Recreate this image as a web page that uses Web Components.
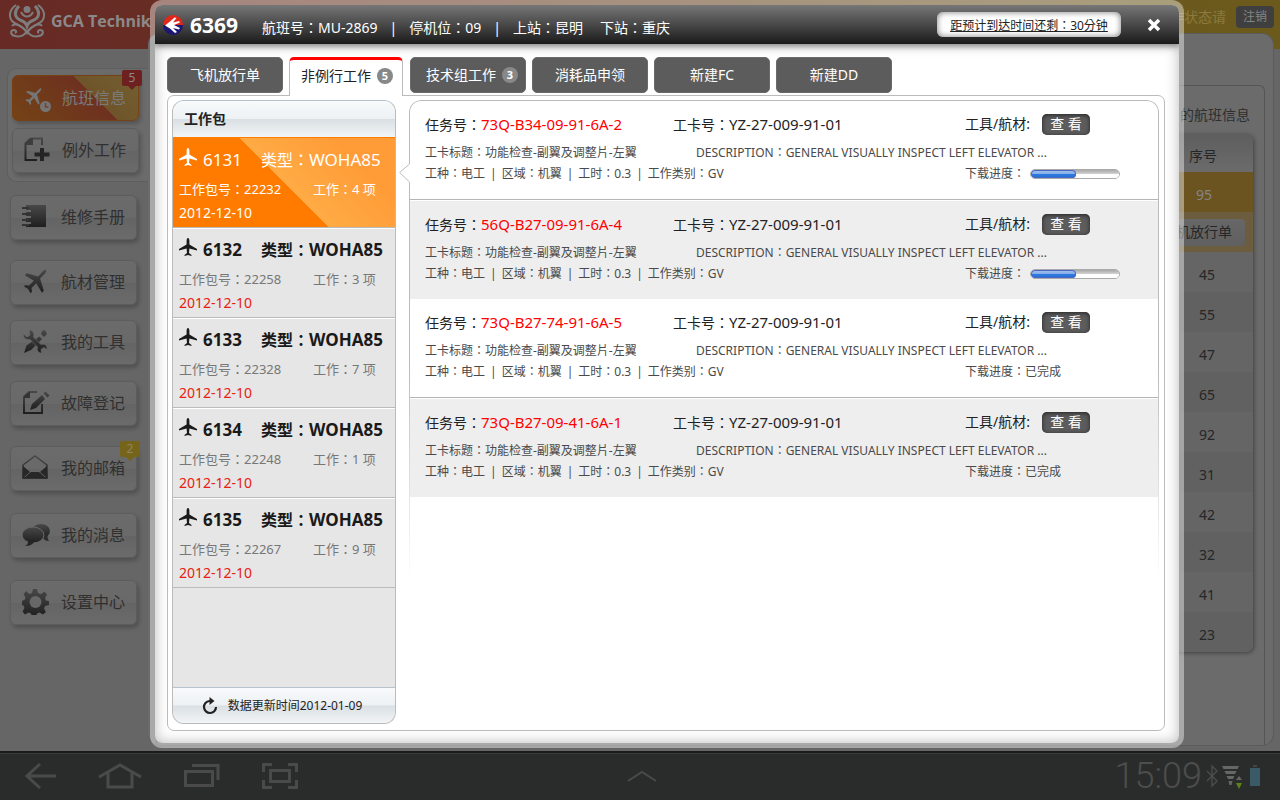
<!DOCTYPE html>
<html lang="zh-TW">
<head>
<meta charset="utf-8">
<title>GCA Technik</title>
<style>
html,body{margin:0;height:100%}
body{font:14px/20px "Noto Sans","Noto Sans CJK TC","Noto Sans CJK SC",sans-serif;color:#222;background:#666}
</style>
</head>
<body>
<app-shell></app-shell>
<script>
const define=(name,html,ready)=>{
  const t=document.createElement('template');
  t.innerHTML='<style>*{box-sizing:border-box}button,a{font:inherit;color:inherit;text-decoration:none}button{border:0;padding:0;background:none;cursor:pointer}svg{display:block}</style>'+html;
  customElements.define(name,class extends HTMLElement{
    constructor(){super();this.attachShadow({mode:'open'}).append(t.content.cloneNode(true));}
    connectedCallback(){if(ready)ready(this,this.shadowRoot);}
  });
};

const PLANE='M25 2c1 1 0 3-1.500 4.500L19 11l4 13-2 2-6-10-5 5 .5 4L9 26.500 6.500 22 2 19.500 3.500 18l4 .5 5-5L3 7.500 5 5.500l12 3.500 4.500-5C23 2.500 24.500 1.500 25 2z';
const ICONS={
  flight:`<path transform="scale(.68)" fill="#757575" d="${PLANE}"/><circle cx="21.500" cy="19.500" r="5.500" fill="#757575"/><path d="M21.500 16v4h3" stroke="#7c4226" stroke-width="1.500" fill="none"/>`,
  extra:'<path d="M6.500 1.500H18V8M6.500 1.500L1.500 6.500V23H13" stroke="url(#g)" stroke-width="2" fill="none"/><path d="M1 8V6l6-5h2v7z" fill="#3d3d3d"/><path d="M16 11h4v4.500h5.500v4H20V24h-4v-4.500h-5.500v-4H16z" fill="#242424"/>',
  manual:'<path fill="url(#g)" d="M4 1h20v22H4v-3h5v-2H4v-4h5v-2H4V8h5V6H4z"/><path d="M0 4h7M0 10h7M0 16h7M0 21h7" stroke="#333" stroke-width="2"/>',
  plane:`<path fill="url(#g)" transform="translate(0 -1) scale(.95)" d="${PLANE}"/>`,
  tools:'<path d="M20 2l3-1 2 4-3 3-3-3zM17.500 7.500l2.500 2.500L9 21l-7 3 2.500-7.500z" fill="url(#g)"/><path d="M1.500 5l3.500 3 3-2-1-5c3 0 5 2 5 5l-.5 2 7.500 7.500 2-.5c3 0 4.500 3 4 5.500l-3-2-3 2 .500 3.500c-3 0-5-2.500-4-6L8 10.500C4 11 1 9 1.500 5z" fill="url(#g)" stroke="#686868" stroke-width=".7"/>',
  report:'<path d="M15 2H7L2 7v16h18v-9" stroke="url(#g)" stroke-width="2" fill="none"/><path d="M2 8V6l5-4h1v6z" fill="#333"/><path d="M20 5l3 4L14 18l-6 2 2-6zM21.500 3.500l2-2 4 4-2 2z" fill="url(#g)"/>',
  mail:'<path d="M1 10L13 1l12 9v13H1z" fill="none" stroke="url(#g)" stroke-width="1.500"/><path d="M1 11l7 6-7 6zM25 11l-7 6 7 6zM2 23l7-6h8l7 6z" fill="#272727"/>',
  chat:'<ellipse cx="19" cy="9" rx="9" ry="7" fill="url(#g)"/><path d="M26 12c-1 4 0 5 1 7-4 0-5-2-7-4z" fill="#2c2c2c"/><ellipse cx="11" cy="13" rx="11" ry="8" fill="url(#g)" stroke="#686868"/><path d="M6 19c0 3-1 4-3 5 4 0 7-1 9-4z" fill="#252525"/>',
  gear:'<path fill="url(#g)" d="M11 0h4l1 4 3 1 3.500-2.500 2.500 3-2 3.500 1 2.500 3 .5v4l-4 1-1 2.500 2 3.500-3 2.500-3.500-2-2.500 1-1 3h-4l-1-3-2.500-1-3.500 2-2.500-3 2-3.500-1-2.500-3-1v-3.500l4-1 1-2.500-2-3.500 3-3L7 5l3-1z"/><circle cx="13.500" cy="13" r="6" fill="#676767"/>'
};

/* Sidebar entry: icon, slotted label and an optional count flag */
define('side-item',`<style>
:host{display:block;position:relative;width:127px}
a{display:flex;align-items:center;gap:var(--label-gap,11px);height:45px;padding:0 0 1px 11px;border:1px solid #5d5d5d;border-radius:6px;font-size:16px;line-height:24px;color:#303030;background:linear-gradient(#6b6b6b,#696969 50%,#646464 51%,#6b6b6b);box-shadow:2px 3px 4px rgba(0,0,0,.22);white-space:nowrap}
svg{width:28px;height:26px;flex:none}
:host([active]) a{color:#7a7a7a;border-color:#784015;height:46px;background:linear-gradient(45deg,#754216 0,#703b1a 30%,#6f3020 62%,transparent 62%),linear-gradient(225deg,#726030,#6b3f21)}
:host([active]) svg{margin-top:4px}
.flag{position:absolute;right:-3px;top:-5px;width:20px;height:16px;border-radius:2px;text-align:center;font-size:12px;line-height:16px;color:#8b8b8b;background:#6d201f}
.flag::after{content:"";position:absolute;left:6px;top:16px;border:4px solid transparent;border-bottom:0;border-top-color:#6d201f}
:host([gold]) .flag{background:#75641a;color:#8d8560}:host([gold]) .flag::after{border-top-color:#75641a}
</style><a href="#"><svg viewBox="0 0 28 26" aria-hidden="true"><defs><linearGradient id="g" x2="0" y2="1"><stop stop-color="#484848"/><stop offset="1" stop-color="#1f1f1f"/></linearGradient></defs><g></g></svg><slot></slot></a>`,(el,r)=>{
  r.querySelector('svg>g').innerHTML=ICONS[el.getAttribute('icon')];
  if(el.hasAttribute('count')&&!r.querySelector('.flag')){const b=document.createElement('span');b.className='flag';b.textContent=el.getAttribute('count');r.append(b);}
});

define('side-nav',`<style>
:host{display:flex;flex-direction:column;padding:0 0 0 9px}
.brand{display:flex;align-items:center;gap:5px;height:49px;padding-bottom:8px;color:#8a8a8a;font:700 16px/24px "Open Sans",sans-serif;white-space:nowrap;margin-left:-1px}
.brand svg{flex:none}
.open{display:flex;flex-direction:column;gap:7px;margin:19px 0 0 -2px;padding:6px 0 8px 4px;border:1px solid #5e5e5e;border-right:0;border-radius:9px 0 0 9px;background:#6b6b6b;--label-gap:10px}
.two,.mid,.low{display:flex;flex-direction:column;padding-left:1px}
.two{margin-top:13px;gap:20px}.mid{margin-top:15px;gap:16px}.low{margin-top:20px;gap:22px}
</style>
<div class="brand"><svg width="38" height="34" viewBox="0 0 38 34" fill="none" stroke="#7d7d7d" aria-hidden="true"><circle cx="19" cy="5.500" r="3.500" fill="#7d7d7d" stroke="none"/><path d="M8 1C2 5 0 12 4 17c4 4 11 4 15 12 4-8 11-8 15-12 4-5 2-12-4-16" stroke-width="2"/><path d="M11 2c-5 5-5 11 1 14 3 1 6 3 7 6 1-3 4-5 7-6 6-3 6-9 1-14" stroke-width="3"/><path d="M13 8c3 6 9 6 12 0" stroke-width="2"/><path d="M19 27c-3 5-8 6-12 5-5-1-5-6-1-6 2 0 3 2 1 3M19 27c3 5 8 6 12 5 5-1 5-6 1-6-2 0-3 2-1 3M4 22c3-4 10 0 15 6 5-6 12-10 15-6" stroke-width="2"/></svg><span>GCA Technik</span></div>
<div class="open"><side-item icon="flight" count="5" active>航班信息</side-item><side-item icon="extra">例外工作</side-item></div>
<div class="two"><side-item icon="manual">维修手册</side-item><side-item icon="plane">航材管理</side-item></div>
<div class="mid"><side-item icon="tools">我的工具</side-item><side-item icon="report">故障登记</side-item></div>
<div class="low"><side-item icon="mail" count="2" gold>我的邮箱</side-item><side-item icon="chat">我的消息</side-item><side-item icon="gear">设置中心</side-item></div>`);

/* Flight list behind the dialog */
define('flight-board',`<style>
:host{display:grid;grid-template-rows:33px 1fr;padding-right:6px;min-width:0}
header{display:flex;justify-content:flex-end;align-items:center;gap:10px;color:#8a7a40}
header button{width:38px;height:22px;border-radius:4px;background:#3f3f3f;color:#858585;font-size:12px;line-height:20px}
main{display:flex;flex-direction:column;margin-bottom:5px;padding:51px 8px 0;border:1px solid #5c5c5c;border-left:0;border-radius:12px;background:#6b6b6b}
section{display:flex;flex-direction:column;flex:1;padding:19px 11px 0;border:1px solid #555;border-bottom:0;border-radius:6px 6px 0 0;align-items:flex-end}
h2{margin:0 3px 9px 0;font-size:14px;line-height:20px;font-weight:400;color:#2e2e2e}
table{width:100%;border-collapse:collapse;border-radius:7px;overflow:hidden;box-shadow:1px 1px 4px rgba(0,0,0,.4);color:#262626;text-align:center;background:#656565}
th{height:38px;padding:6px 8px 0 0;font-weight:400;background:linear-gradient(#5e5e5e,#6b6b6b)}
td{height:40px;padding:6px 0 0}
th:last-child,td:last-child{width:92px}
tr:nth-child(even) td{background:#616161}
tbody tr:nth-child(1) td{background:#6c5420;color:#858585;padding-right:6px}
tbody tr:nth-child(2) td{background:#6c5d3e;padding:0 8px 0 0;text-align:right}
td button{height:27px;width:96px;border-radius:4px;background:linear-gradient(#676767,#606060);color:#262626}
</style>
<header><span>作状态请</span><button type="button">注销</button></header>
<main><section><h2>的航班信息</h2><table><thead><tr><th></th><th>序号</th></tr></thead><tbody></tbody></table></section></main>`,(el,r)=>{
  r.querySelector('tbody').innerHTML='<tr><td></td><td>95</td></tr><tr><td colspan="2"><button type="button">飞机放行单</button></td></tr>'+[45,55,47,65,92,31,42,32,41,23].map(n=>`<tr><td></td><td>${n}</td></tr>`).join('');
});

define('tab-button',`<style>
:host{display:block;width:116px}
button{display:flex;width:100%;height:36px;align-items:center;justify-content:center;gap:6px;border-radius:5px;color:#fff;background:#5c5c5c;border:1px solid #6a6a6a;white-space:nowrap}
i{font:700 11px/16px "Open Sans",sans-serif;width:16px;height:16px;border-radius:50%;background:#888;color:#fff}
:host([count]) button{padding-left:8px}
:host([active]){width:115px}
:host([active]) button{height:39px;position:relative;width:114px;color:#222;background:#fff;border:1px solid #bbb;border-top:3px solid #f00;border-bottom:0;border-radius:5px 5px 0 0;padding:0 0 4px 2px}
</style><button type="button" role="tab"><slot></slot></button>`,(el,r)=>{
  const b=r.querySelector('button');b.setAttribute('aria-selected',el.hasAttribute('active'));
  if(el.hasAttribute('count')&&!b.querySelector('i')){const i=document.createElement('i');i.textContent=el.getAttribute('count');b.append(i);}
});

/* One work package in the left list */
define('pack-item',`<style>
:host{display:block}
button{display:grid;width:100%;height:90px;text-align:left;grid-template:32px 26px 22px/134px 1fr;align-content:start;align-items:center;padding:5px 0 0 6px;font-size:13px;line-height:20px;color:#777;border-bottom:1px solid #bbb;border-top:1px solid #fff;white-space:nowrap}
strong{grid-column:1/-1;display:flex;align-items:center;font-size:16px;line-height:24px;color:#1a1a1a}
strong svg{margin:-6px 6px 0 0}strong span+span{margin-left:19px}
strong slot{font-size:17px}
time{font-size:14px;color:#e8200f}
:host([active]) button{height:91px;color:#fff;border-top-color:#ff7e00;padding-top:6px;background:linear-gradient(45deg,#ff7b00 50%,transparent 50%),linear-gradient(45deg,#ffab45 50%,#ff9c38 80%)}
:host([active]) strong{color:#fff;font-weight:400}:host([active]) time{color:#fff}
</style><button type="button"><strong><svg width="18" height="18" viewBox="0 0 18 18" fill="currentColor" aria-hidden="true"><path d="M9 0c1 0 1.400 1.500 1.400 3v3.500L18 11v1.500l-7.600-2-.4 4.500 2.500 2v1L9 17l-3.500 1v-1L8 15l-.4-4.500-7.600 2V11l7.600-4.500V3C7.600 1.500 8 0 9 0z"/></svg><span><slot name="no"></slot></span><span>类型：<slot name="type"></slot></span></strong><span>工作包号：<slot name="pack"></slot></span><span>工作：<slot name="jobs"></slot> 项</span><time><slot name="date"></slot></time></button>`);

define('pack-list',`<style>
:host{display:flex;flex-direction:column;width:224px;flex:none;border:1px solid #bbb;border-top-color:#b6c3cd;border-radius:12px;overflow:hidden;background:#e6e6e6}
h2,footer{margin:0;background:linear-gradient(#f8fafb,#edf1f4 49%,#d9dfe3 51%,#f2f5f7)}
h2{height:36px;padding-left:11px;font-size:14px;line-height:36px}
.rows{flex:1}
footer{display:flex;align-items:center;justify-content:center;gap:10px;height:36px;border-top:1px solid #b6c3cd;padding-right:4px;font-size:12px;line-height:20px;color:#222}
</style><h2>工作包</h2><div class="rows"></div><footer><svg width="16" height="18" viewBox="0 0 16 18" aria-hidden="true"><path d="M9 4H7.500A6 6 0 1 0 14 10" fill="none" stroke="#222" stroke-width="2.200"/><path d="M7.500 0l5 4-5 4z" fill="#222"/></svg><span>数据更新时间2012-01-09</span></footer>`,(el,r)=>{
  r.querySelector('.rows').innerHTML=[[6131,22232,4],[6132,22258,3],[6133,22328,7],[6134,22248,1],[6135,22267,9]].map(([n,p,j],i)=>`<pack-item${i?'':' active'}><span slot="no">${n}</span><span slot="type">WOHA85</span><span slot="pack">${p}</span><span slot="jobs">${j}</span><span slot="date">2012-12-10</span></pack-item>`).join('');
});

define('task-row',`<style>
:host{display:block;height:99px;padding:10px 0 0 15px;border-bottom:1px solid transparent;font-size:12px;line-height:20px;color:#4a4a4a;white-space:nowrap}
:host(:nth-child(odd)){border-bottom-color:#b5b5b5}
:host(:nth-child(even)){background:#eee;border-top:1px solid #fff}
.line{display:grid;align-items:center;grid-template-columns:248fr 292fr 193fr}
.line>*{min-width:0}
.top{height:26px;font-size:14px;color:#222;margin-bottom:5px}
.desc{grid-template-columns:271fr 462fr;height:21px}.meta{grid-template-columns:540fr 193fr;height:21px}
b{font-weight:400;color:#f00}
.num{font-size:15px}
.act,.load{display:flex;align-items:center}.act{gap:12px}
.act button{width:48px;height:21px;border-radius:5px;color:#fff;line-height:20px;background:#5c5c5c;box-shadow:inset 0 1px 4px #222}
.cats{display:flex;gap:5px}
progress{appearance:none;width:90px;height:10px;margin-left:5px;border:1px solid #aaa;border-radius:5px;overflow:hidden;background:#fff}
progress::-webkit-progress-bar{background:linear-gradient(#a8a8a8,#cfcfcf 45%,#fff 55%)}
progress::-webkit-progress-value{border-radius:4px;background:linear-gradient(#a9c4ee,#86aee9 45%,#2f78dd 55%,#2370d8);box-shadow:inset 0 0 0 1px #4767c2}
</style><div class="line top"><span>任务号：<b class="num"><slot name="id"></slot></b></span><span>工卡号：<span class="num">YZ-27-009-91-01</span></span><span class="act">工具/航材:<button type="button">查 看</button></span></div>
<div class="line desc"><span>工卡标题：功能检查-副翼及调整片-左翼</span><span>DESCRIPTION：GENERAL VISUALLY INSPECT LEFT ELEVATOR ...</span></div>
<div class="line meta"><span class="cats"><span>工种：电工</span><span>|</span><span>区域：机翼</span><span>|</span><span>工时：0.3</span><span>|</span><span>工作类别：GV</span></span><label class="load">下载进度：<slot name="state"><progress max="100" value="51"></progress></slot></label></div>`);

define('task-list',`<style>
:host{display:block;position:relative;flex:1;min-width:0;padding:1px}
.frame{position:absolute;inset:0 0 90px;border:1px solid #bbb;border-bottom:0;border-radius:12px 12px 0 0;pointer-events:none;-webkit-mask:linear-gradient(#000 50%,transparent 90%);mask:linear-gradient(#000 50%,transparent 90%)}
.beak{position:absolute;left:-10px;top:63px}
</style><div class="frame"></div><div><task-row><span slot="id">73Q-B34-09-91-6A-2</span></task-row><task-row><span slot="id">56Q-B27-09-91-6A-4</span></task-row><task-row><span slot="id">73Q-B27-74-91-6A-5</span><span slot="state">已完成</span></task-row><task-row><span slot="id">73Q-B27-09-41-6A-1</span><span slot="state">已完成</span></task-row></div><svg class="beak" width="12" height="20" viewBox="0 0 12 20" aria-hidden="true"><path d="M12 0H11L.7 9.500 11 20h1z" fill="#fff"/><path d="M10.500 0v1L.7 9.500 10.500 19v1" fill="none" stroke="#bbb"/></svg>`);

define('flight-dialog',`<style>
:host{display:flex;flex-direction:column;border:5px solid rgba(255,255,255,.42);border-radius:12px;background:#fff padding-box;overflow:hidden}
header{display:flex;align-items:center;flex:none;height:39px;padding:0 17px 0 8px;color:#fff;background:linear-gradient(#777,#1a1a1a);box-shadow:0 2px 6px rgba(0,0,0,.4);white-space:nowrap;z-index:1}
h1{margin:0 24px 0 7px;font-size:21px;line-height:28px}
.info{display:flex;gap:12px;padding-top:6px}
.info .gap{margin-left:5px}
.eta{display:block;margin-left:auto;width:184px;height:25px;border-radius:6px;text-align:center;font-size:12px;line-height:28px;text-decoration:underline;color:#222;background:#fff;box-shadow:inset 0 0 6px #777}
.close{margin-left:25px}
.body{flex:1;display:flex;flex-direction:column;padding:13px 14px 12px 12px;box-shadow:inset 0 0 14px rgba(0,0,0,.28);min-height:0}
nav{display:flex;gap:6px;height:38px;flex:none}
.sheet{flex:1;display:flex;gap:13px;padding:4px 5px 6px 4px;border:1px solid #bbb;border-radius:7px;background:#fff}
</style>
<header><svg width="20" height="20" viewBox="0 0 20 20" aria-hidden="true"><path d="M0 10a10 10 0 0 1 20 0z" fill="#e22619"/><path d="M0 10a10 10 0 0 0 20 0z" fill="#1c1772"/><path d="M2 10.500L7 6.500 11.500 2.500l2 .5L10 7.500l6-1.500 1 1.500L11 10l6 3-1 1.500-6-1.500 4 4-2 1L7 13.500z" fill="#fff"/></svg><h1>6369</h1>
<div class="info"><span>航班号：MU-2869</span><span>|</span><span>停机位：09</span><span>|</span><span>上站：昆明</span><span class="gap">下站：重庆</span></div>
<a class="eta" href="#">距预计到达时间还剩：30分钟</a><button class="close" type="button" aria-label="关闭"><svg width="16" height="16" viewBox="0 0 16 16"><path d="M3 3l10 10M13 3L3 13" stroke="#fff" stroke-width="3.500"/></svg></button></header>
<div class="body"><nav role="tablist"><tab-button>飞机放行单</tab-button><tab-button count="5" active>非例行工作</tab-button><tab-button count="3">技术组工作</tab-button><tab-button>消耗品申领</tab-button><tab-button>新建FC</tab-button><tab-button>新建DD</tab-button></nav>
<div class="sheet"><pack-list></pack-list><task-list></task-list></div></div>`);

/* Tablet system bar */
define('system-bar',`<style>
:host{display:grid;grid-template-columns:1fr auto 1fr;align-items:center;height:49px;padding:0 20px 2px 24px;background:#2a2c2b;border-top:2px solid #1b1b1b;box-shadow:inset 0 1px #3b3b3b;color:#4a4a4a}
.keys{display:flex;gap:42px}
.status{display:flex;justify-content:flex-end;align-items:center;gap:4px}
time{font:300 36px/44px Roboto,sans-serif;color:#4d4d4d}
svg{fill:none;stroke:#4a4a4a;stroke-width:3}
</style>
<div class="keys"><button type="button" aria-label="返回"><svg width="32" height="28" viewBox="0 0 32 28"><path d="M32 14H4M16 2L3 14l13 12"/></svg></button><button type="button" aria-label="主页"><svg width="44" height="28" viewBox="0 0 44 28"><path d="M1 15L22 3l21 12M10 11v14h24V11"/></svg></button><button type="button" aria-label="最近"><svg width="36" height="28" viewBox="0 0 36 28"><path d="M1.500 9.500h27v14h-27zM8 3.500h26V18"/></svg></button><button type="button" aria-label="截屏"><svg width="36" height="28" viewBox="0 0 36 28"><path d="M1.500 10V2.500H10M26 2.500h8.500V10M1.500 18v7.500H10M26 25.500h8.500V18M8.500 8.500h19v11h-19z"/></svg></button></div>
<svg width="30" height="12" viewBox="0 0 30 12" style="stroke-width:2"><path d="M1 11l14-9 14 9"/></svg>
<div class="status"><time>15:09</time><svg width="12" height="24" viewBox="0 0 12 24" style="stroke-width:1.500"><path d="M1 7l10 10-5 5V2l5 5L1 17"/></svg><svg width="20" height="26" viewBox="0 0 20 26" style="stroke:none"><path d="M0 3h17l-1.500 3h-14zM2.500 8h12l-1.500 3H4zM4.500 13h8L11 16H6zM6.500 18h4L9.500 22h-2zM14 17l3-4 3 4z" fill="#666"/><path d="M14 20h6l-3 6z" fill="#5c8218"/></svg><svg width="10" height="24" viewBox="0 0 10 24" style="stroke:none;margin-left:4px"><path d="M0 4h10v18H0z" fill="#3a5a68"/><path d="M3 1h4v2H3z" fill="#444"/></svg></div>`);

define('app-shell',`<style>
:host{display:grid;position:relative;grid-template:1fr auto/148px 1fr;min-height:100vh;background:linear-gradient(90deg,#672a25,#672d24 12%,#685022 75%,#6b5a1c 95%) 0 0/100% 49px no-repeat,#666}
system-bar{grid-column:1/-1}
flight-dialog{position:absolute;inset:0 96px 52px 150px}
</style><side-nav></side-nav><flight-board></flight-board><system-bar></system-bar><flight-dialog role="dialog" aria-label="6369"></flight-dialog>`);
</script>
</body>
</html>
